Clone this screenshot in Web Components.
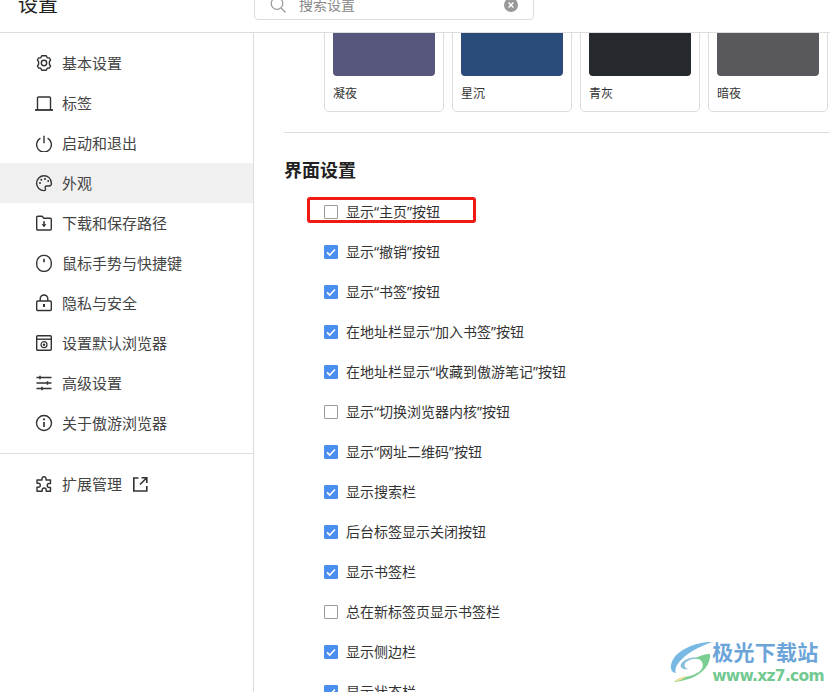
<!DOCTYPE html>
<html lang="zh-CN">
<head>
<meta charset="utf-8">
<title>设置</title>
<style>
  html, body { margin: 0; height: 100%; }
  body {
    background: #fff;
    color: #333;
    overflow: hidden;
    font-family: "Liberation Sans", "Noto Sans CJK SC", sans-serif;
  }
  settings-page { height: 692px; }
</style>
</head>
<body>
<settings-page>
  <settings-header slot="header"></settings-header>
  <settings-sidebar slot="side">
    <nav-item icon="gear">基本设置</nav-item>
    <nav-item icon="tab">标签</nav-item>
    <nav-item icon="power">启动和退出</nav-item>
    <nav-item icon="palette" active>外观</nav-item>
    <nav-item icon="folder">下载和保存路径</nav-item>
    <nav-item icon="mouse">鼠标手势与快捷键</nav-item>
    <nav-item icon="lock">隐私与安全</nav-item>
    <nav-item icon="browser">设置默认浏览器</nav-item>
    <nav-item icon="sliders">高级设置</nav-item>
    <nav-item icon="info">关于傲游浏览器</nav-item>
    <nav-item icon="puzzle" slot="extra" external>扩展管理</nav-item>
  </settings-sidebar>
  <settings-main slot="main">
    <theme-card slot="themes" color="#57577d">凝夜</theme-card>
    <theme-card slot="themes" color="#2b4b7a">星沉</theme-card>
    <theme-card slot="themes" color="#26292e">青灰</theme-card>
    <theme-card slot="themes" color="#58585d">暗夜</theme-card>
    <check-row>显示“主页”按钮</check-row>
    <check-row checked>显示“撤销”按钮</check-row>
    <check-row checked>显示“书签”按钮</check-row>
    <check-row checked>在地址栏显示“加入书签”按钮</check-row>
    <check-row checked>在地址栏显示“收藏到傲游笔记”按钮</check-row>
    <check-row>显示“切换浏览器内核”按钮</check-row>
    <check-row checked>显示“网址二维码”按钮</check-row>
    <check-row checked>显示搜索栏</check-row>
    <check-row checked>后台标签显示关闭按钮</check-row>
    <check-row checked>显示书签栏</check-row>
    <check-row>总在新标签页显示书签栏</check-row>
    <check-row checked>显示侧边栏</check-row>
    <check-row checked>显示状态栏</check-row>
  </settings-main>
  <site-watermark slot="over"></site-watermark>
</settings-page>

<script>
const ICONS = {
  gear: '<path d="M6.700 1.800h4.600l.9 1.900 2.100.2 1.300 2.100-1.200 1.700v2.600l1.200 1.700-1.300 2.100-2.100.2-.9 1.900H6.700l-.9-1.900-2.100-.2-1.300-2.100 1.200-1.700V7.700L2.400 6l1.300-2.100 2.100-.2z"/><circle cx="9" cy="9" r="2.700"/>',
  tab: '<path d="M2.500 16V4a1 1 0 0 1 1-1h11a1 1 0 0 1 1 1v12"/><path d="M0 16h18" stroke-width="1.800"/>',
  power: '<path d="M5.400 4.200a7.400 7.400 0 1 0 7.200 0"/><path d="M9 1.800v7.400"/>',
  palette: '<path d="M9 1.800a7.400 7.400 0 1 0 0 14.800c1.800 0 1.800-1.400 1.300-2.300-.6-1.200.1-2.300 1.400-2.300h2.300c1.700 0 2.500-1 2.400-2.600C16.200 4.500 12.900 1.800 9 1.800z"/><circle cx="5" cy="9" r="1" fill="#333" stroke="none"/><circle cx="6.300" cy="5.700" r="1" fill="#333" stroke="none"/><circle cx="10" cy="4.900" r="1" fill="#333" stroke="none"/><circle cx="13.200" cy="7" r="1" fill="#333" stroke="none"/>',
  folder: '<path d="M1.700 3.300a1 1 0 0 1 1-1h4.400l1.800 2h6.400a1 1 0 0 1 1 1V15a1 1 0 0 1-1 1H2.700a1 1 0 0 1-1-1z"/><path d="M9 7.200v5.300" stroke-width="1.600"/><path d="M6.500 10.300h5L9 13z" fill="#333" stroke="none"/>',
  mouse: '<rect x="1.700" y="1.400" width="14.600" height="16" rx="7"/><path d="M9 4.800v3.400" stroke-width="1.600"/>',
  lock: '<rect x="1.700" y="7" width="14.600" height="9.500" rx="1"/><path d="M5.200 7V4.800a3.800 3.800 0 0 1 7.600 0V7"/><path d="M9 10v3" stroke-width="2"/>',
  browser: '<rect x="1.700" y="1.700" width="14.600" height="14.600" rx="1"/><path d="M1.700 5.200h14.600"/><circle cx="9" cy="10.700" r="3" stroke-width="1.200"/><circle cx="9" cy="10.700" r="1.200" fill="#333" stroke="none"/>',
  sliders: '<path d="M1.500 3.500h15M1.500 9h15M1.500 14.500h15"/><path d="M5 1.800v3.400M12.500 7.300v3.400M7 12.800v3.400" stroke-width="1.500"/>',
  info: '<circle cx="9" cy="9" r="7.500"/><path d="M9 8v5" stroke-width="1.700"/><circle cx="9" cy="5.300" r="1.100" fill="#333" stroke="none"/>',
  puzzle: '<path d="M7 3.700a2 2 0 0 1 4 0V5h4.500v3.500h-1.300a2 2 0 0 0 0 4h1.300V16.300h-4.300V15a2 2 0 0 0-4 0v1.300H2v-4h1.300a2 2 0 0 0 0-4H2V5h5z"/>'
};

const pageTemplate = document.createElement("template");
pageTemplate.innerHTML = `
  <style>
    :host { display: flex; flex-direction: column; position: relative; overflow: hidden; }
    .body { display: flex; flex: 1; min-height: 0; }
  </style>
  <slot name="header"></slot>
  <div class="body">
    <slot name="side"></slot>
    <slot name="main"></slot>
  </div>
  <slot name="over"></slot>
`;
customElements.define("settings-page", class extends HTMLElement {
  constructor() {
    super();
    this.attachShadow({ mode: "open" }).appendChild(pageTemplate.content.cloneNode(true));
  }
});

const headerTemplate = document.createElement("template");
headerTemplate.innerHTML = `
  <style>
    :host {
      display: flex;
      flex: none;
      align-items: flex-end;
      height: 32px;
      border-bottom: 1px solid #ddd;
      overflow: hidden;
    }
    .title {
      flex: none;
      width: 236px;
      padding: 0 0 12px 18px;
      font-size: 20px;
      line-height: 30px;
      color: #222;
    }
    .search {
      display: flex;
      flex: none;
      align-items: center;
      box-sizing: border-box;
      width: 280px;
      height: 40px;
      margin-bottom: 12px;
      padding: 0 15px;
      border: 1px solid #ddd;
      border-radius: 4px;
      color: #888;
      font-size: 14px;
    }
    .search span { flex: 1; padding: 9px 0 0 13px; line-height: 20px; }
    .search svg { flex: none; margin-top: 10px; }
  </style>
  <div class="title">设置</div>
  <div class="search">
    <svg width="16" height="16" viewBox="0 0 16 16" fill="none" stroke="#999" stroke-width="1.200"><circle cx="7" cy="6.500" r="5.800"/><path d="M11 11l4.500 4.500"/></svg>
    <span>搜索设置</span>
    <svg width="14" height="14" viewBox="0 0 14 14"><circle cx="7" cy="7" r="7" fill="#999"/><path d="M4.600 4.600l4.800 4.800M9.400 4.600l-4.800 4.800" stroke="#fff" stroke-width="1.400"/></svg>
  </div>
`;
customElements.define("settings-header", class extends HTMLElement {
  constructor() {
    super();
    this.attachShadow({ mode: "open" }).appendChild(headerTemplate.content.cloneNode(true));
  }
});

const sidebarTemplate = document.createElement("template");
sidebarTemplate.innerHTML = `
  <style>
    :host {
      display: block;
      flex: none;
      width: 253px;
      padding-top: 10px;
      border-right: 1px solid #ddd;
    }
    .line { height: 1px; background: #ddd; margin: 10px 0; }
  </style>
  <slot></slot>
  <div class="line"></div>
  <slot name="extra"></slot>
`;
customElements.define("settings-sidebar", class extends HTMLElement {
  constructor() {
    super();
    this.attachShadow({ mode: "open" }).appendChild(sidebarTemplate.content.cloneNode(true));
  }
});

customElements.define("nav-item", class extends HTMLElement {
  constructor() {
    super();
    this.attachShadow({ mode: "open" });
  }
  connectedCallback() {
    const ext = this.hasAttribute("external")
      ? `<svg class="ext" width="18" height="18" viewBox="0 0 18 18" fill="none" stroke="#333" stroke-width="1.600"><path d="M8.500 3H3.800v13h13v-5"/><path d="M10 9.500l6.300-6.300M11.500 2.800h5.300v5.300"/></svg>`
      : "";
    this.shadowRoot.innerHTML = `
      <style>
        :host {
          display: flex;
          align-items: center;
          height: 40px;
          padding-left: 35px;
          font-size: 15px;
          color: #444;
          cursor: pointer;
        }
        :host([active]) { background: #f0f0f0; }
        .icon { flex: none; margin-right: 9px; }
        .text { padding-bottom: 2px; }
        .ext { margin-left: 8px; }
      </style>
      <svg class="icon" width="18" height="18" viewBox="0 0 18 18" fill="none" stroke="#333" stroke-width="1.400" stroke-linejoin="round">${ICONS[this.getAttribute("icon")]}</svg>
      <span class="text"><slot></slot></span>${ext}
    `;
  }
});

const mainTemplate = document.createElement("template");
mainTemplate.innerHTML = `
  <style>
    :host { display: block; flex: 1; min-width: 0; overflow: hidden; padding-left: 30px; }
    .themes {
      display: flex;
      gap: 8px;
      margin: -40px 0 0 40px;
      width: 504px;
    }
    .line { height: 1px; background: #ddd; margin: 20px 0 0; }
    h2 {
      margin: 25px 0 8px;
      font-size: 18px;
      line-height: 26px;
      font-weight: 700;
      color: #222;
    }
  </style>
  <div class="themes"><slot name="themes"></slot></div>
  <div class="line"></div>
  <h2>界面设置</h2>
  <slot></slot>
`;
customElements.define("settings-main", class extends HTMLElement {
  constructor() {
    super();
    this.attachShadow({ mode: "open" }).appendChild(mainTemplate.content.cloneNode(true));
  }
  connectedCallback() {
    // the red mark sits on the first row of the list
    const first = this.querySelector("check-row");
    if (first) first.setAttribute("marked", "");
  }
});

customElements.define("theme-card", class extends HTMLElement {
  constructor() {
    super();
    this.attachShadow({ mode: "open" });
  }
  connectedCallback() {
    this.shadowRoot.innerHTML = `
      <style>
        :host {
          display: block;
          flex: none;
          box-sizing: border-box;
          width: 120px;
          height: 119px;
          padding: 0 8px;
          border: 1px solid #ddd;
          border-radius: 5px;
        }
        .swatch {
          height: 82px;
          border-radius: 4px;
          background: ${this.getAttribute("color")};
        }
        .name {
          height: 36px;
          line-height: 36px;
          font-size: 12px;
          color: #333;
        }
      </style>
      <div class="swatch"></div>
      <div class="name"><slot></slot></div>
    `;
  }
});

const rowTemplate = document.createElement("template");
rowTemplate.innerHTML = `
  <style>
    :host {
      display: flex;
      align-items: center;
      position: relative;
      height: 40px;
      padding-left: 40px;
      font: 14px "Noto Sans", "Noto Sans CJK SC", sans-serif;
      color: #333;
    }
    .box {
      flex: none;
      box-sizing: border-box;
      width: 14px;
      height: 14px;
      margin-right: 8px;
      border: 1px solid #9a9a9a;
      border-radius: 1px;
      background: #fff;
    }
    .box svg { display: none; }
    :host([checked]) .box { background: #4a8ef0; border-color: #4a8ef0; }
    :host([checked]) .box svg { display: block; margin: -1px; }
    .text { padding-bottom: 2px; }
    .mark {
      display: none;
      position: absolute;
      left: 23px;
      top: 5px;
      width: 163px;
      height: 20px;
      border: 3px solid #f01a14;
      border-radius: 3px;
    }
    :host([marked]) .mark { display: block; }
  </style>
  <span class="box"><svg width="14" height="14" viewBox="0 0 14 14" fill="none" stroke="#fff" stroke-width="1.600"><path d="M3 7.300l2.800 2.700L11 4.500"/></svg></span>
  <span class="text"><slot></slot></span>
  <span class="mark"></span>
`;
customElements.define("check-row", class extends HTMLElement {
  constructor() {
    super();
    this.attachShadow({ mode: "open" }).appendChild(rowTemplate.content.cloneNode(true));
  }
});

const watermarkTemplate = document.createElement("template");
watermarkTemplate.innerHTML = `
  <style>
    :host {
      display: flex;
      align-items: center;
      position: absolute;
      right: 6px;
      bottom: 7px;
      gap: 0;
      opacity: .9;
    }
    .words { display: flex; flex-direction: column; }
    .cn {
      font: 700 21px/24px "Noto Sans CJK SC", sans-serif;
      letter-spacing: 0.300px;
      color: #5b9bd5;
    }
    .en {
      margin-top: 4px;
      font: 700 15.500px/18px "DejaVu Sans", sans-serif;
      letter-spacing: -0.700px;
      color: #63c486;
    }
    svg { margin-right: -2px; }
  </style>
  <svg width="44" height="42" viewBox="0 0 44 42" fill="none">
    <path d="M42 1C26 1 4 9 1 24c-1 5 2 8 5 8C3 25 14 11 42 1z" fill="#6ab2e2"/>
    <path d="M11 23c4-6 14-8 20-5-5-1-12 0-15 3-3 3-1 7 3 7-5 1-10-1-8-5z" fill="#7db8d8"/>
    <path d="M40 13c1 14-13 26-36 28 3-3 7-4 12-5 14-3 19-9 16-15-1-3-5-4-8-3 6-4 13-5 16-5z" fill="#6cc987"/>
    <path d="M4 41c4-4 8-5 13-6-3 3-7 5-13 6z" fill="#e9dc8c"/>
  </svg>
  <div class="words">
    <span class="cn">极光下载站</span>
    <span class="en">www.xz7.com</span>
  </div>
`;
customElements.define("site-watermark", class extends HTMLElement {
  constructor() {
    super();
    this.attachShadow({ mode: "open" }).appendChild(watermarkTemplate.content.cloneNode(true));
  }
});
</script>
</body>
</html>
